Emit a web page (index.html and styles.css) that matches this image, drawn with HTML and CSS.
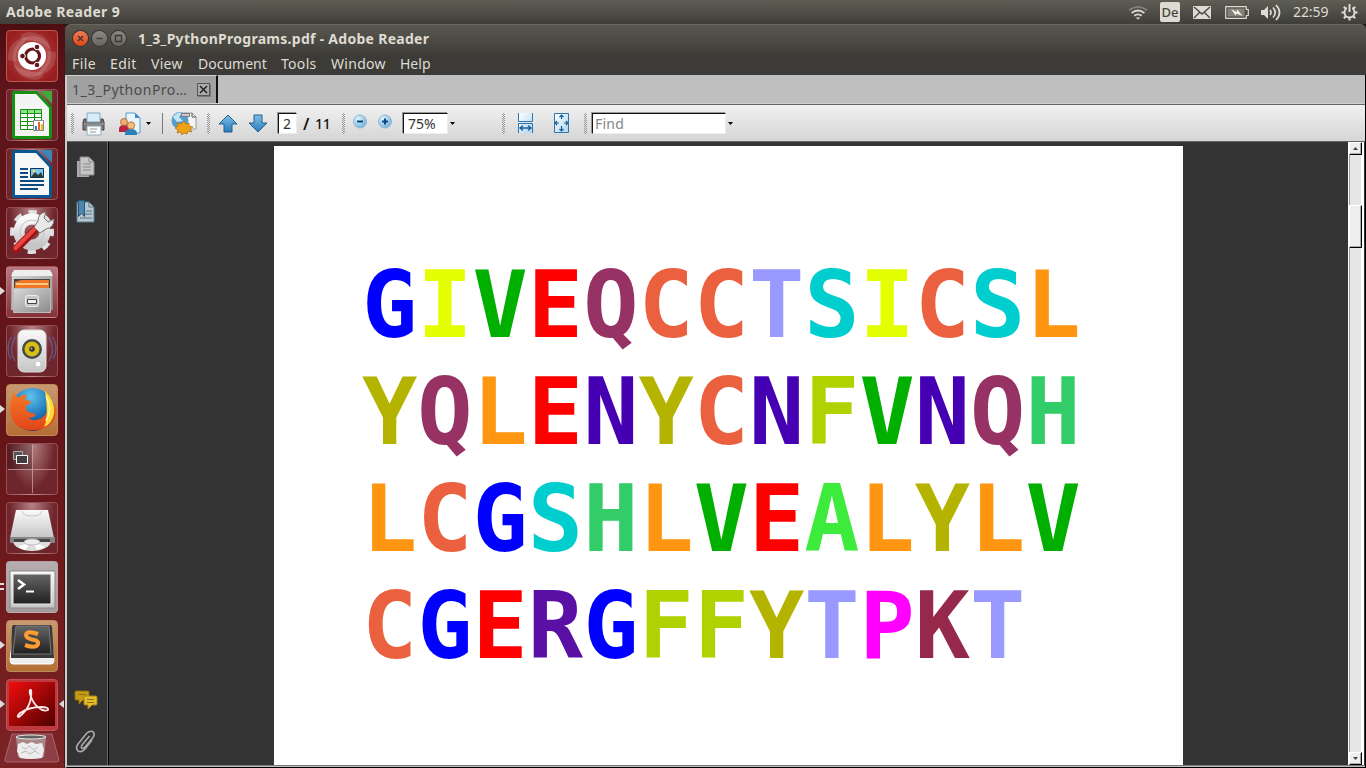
FILE: index.html
```
<!DOCTYPE html>
<html lang="en">
<head>
<meta charset="utf-8">
<title>1_3_PythonPrograms.pdf - Adobe Reader</title>
<link rel="stylesheet" href="styles.css">
</head>
<body>
<svg class="defs" width="0" height="0">
  <defs>
    <linearGradient id="silver" x2="0" y2="1"><stop stop-color="#fafafa"/><stop offset="1" stop-color="#c5c5c5"/></linearGradient>
    <linearGradient id="cabinet" x2="1" y2="1"><stop stop-color="#d8d8d8"/><stop offset="1" stop-color="#8b8b8b"/></linearGradient>
    <linearGradient id="blue" x2="0" y2="1"><stop stop-color="#7cc0ea"/><stop offset="1" stop-color="#2b7cba"/></linearGradient>
    <linearGradient id="paper" x2="1" y2="1"><stop stop-color="#fff"/><stop offset="1" stop-color="#aed3ee"/></linearGradient>
    <linearGradient id="dark" x2="0" y2="1"><stop stop-color="#666"/><stop offset="1" stop-color="#202020"/></linearGradient>
    <linearGradient id="adobe" x2="1" y2="1"><stop stop-color="#f20d0d"/><stop offset="1" stop-color="#4d0000"/></linearGradient>
    <linearGradient id="fox" x2="0" y2="1"><stop stop-color="#f37a24"/><stop offset="1" stop-color="#e2451b"/></linearGradient>
    <radialGradient id="globe" cx=".45" cy=".2" r=".8"><stop stop-color="#5fc3ee"/><stop offset=".6" stop-color="#1c73b6"/><stop offset="1" stop-color="#0b2f68"/></radialGradient>
    <radialGradient id="ball" cx=".35" cy=".3" r=".8"><stop stop-color="#e2f3fd"/><stop offset="1" stop-color="#68addb"/></radialGradient>
  </defs>
</svg>

<header class="panel">
  <span class="panel-title">Adobe Reader 9</span>
  <div class="tray">
    <svg class="wifi" width="20" height="16" viewBox="0 0 20 16" fill="none" stroke="#dfdbd2" stroke-width="1.8"><path d="M1 5.2Q10-1.6 19 5.2" stroke="#85827a"/><path d="M3.6 8Q10 3 16.4 8M6.3 10.8Q10 8 13.7 10.8"/><path d="M7.8 12.4h4.4L10 14.8z" fill="#dfdbd2" stroke="none"/></svg>
    <span class="lang">De</span>
    <svg class="mail" width="18" height="14" viewBox="0 0 18 14"><path fill="#dfdbd2" d="M0 0h18v13H0z"/><path d="M1 1l8 7 8-7M1 12l5.500-5.500M17 12l-5.500-5.500" fill="none" stroke="#4b4944" stroke-width="1.400"/></svg>
    <svg class="battery" width="24" height="14" viewBox="0 0 24 14"><path d="M.7.700h20.600v2.800h2v6h-2v2.800H.7z" fill="none" stroke="#dfdbd2" stroke-width="1.200"/><path d="M2.500 2.500h17v8h-17z" fill="#85827a"/><path d="M6 3l6 3V3l5.500 7-6.500-2.500V10z" fill="#f2f0e9"/></svg>
    <svg class="sound" width="20" height="17" viewBox="0 0 20 17"><path d="M0 6h3l4-4v13l-4-4H0z" fill="#dfdbd2"/><g fill="none" stroke="#dfdbd2" stroke-width="1.700"><path d="M9 6q2 2.500 0 5M12 3.500q4.500 5 0 10M15 1q7 7.500 0 15"/></g></svg>
    <span class="clock">22:59</span>
    <svg class="gear" width="17" height="17" viewBox="0 0 17 17" fill="none" stroke="#dfdbd2"><circle cx="8.500" cy="8.500" r="5" stroke-width="1.900"/><path d="M.5 8.500h3M13.500 8.500h3M2.800 2.800l2 2M12.200 12.200l2 2M14.200 2.800l-2 2M4.800 12.200l-2 2M8.500 13.500v3" stroke-width="2"/><path d="M8.500 1.500v6" stroke="#504e48" stroke-width="5"/><path d="M8.500 0v8" stroke-width="2"/></svg>
  </div>
</header>

<div class="desktop">
  <nav class="launcher">
    <div class="tile dash">
      <svg viewBox="0 0 52 52"><g fill="#fff" fill-opacity=".13"><path d="M2 30Q1 8 26 6q14 0 19 14Q34 8 22 11 8 16 10 32z"/><path d="M22 2q24 1 23 25-2 14-15 19 11-12 7-24Q32 8 16 10 12 4 22 2z"/><path d="M50 22q1 22-24 25-14 0-19-14 11 11 23 8 14-5 12-20z"/><path d="M30 50Q7 49 7 25 9 11 22 7 11 19 15 31q5 13 21 11 4 6-6 8z"/></g><circle cx="26" cy="26" r="14" fill="#fff"/><circle cx="26.500" cy="26" r="7" fill="none" stroke="#641417" stroke-width="3.200"/><g fill="#641417" stroke="#fff"><circle cx="16.500" cy="26" r="2.800"/><circle cx="31" cy="17" r="2.800"/><circle cx="31" cy="35" r="2.800"/></g></svg>
    </div>
    <div class="tile doc">
      <svg viewBox="0 0 52 52"><path d="M8 2h23l15 16v30q0 2-2 2H8q-2 0-2-2V4q0-2 2-2z" fill="#169213"/><path d="M9 5h21l13 14v28H9z" fill="#f4f4f4"/><path d="M34 2h12v13z" fill="#44a53d"/><path d="M14 20h22v21H14z" fill="#fff"/><path d="M14 20h22v4H14z" fill="#8ee184"/><path d="M14.500 20.500h21v20h-21zM14 24.500h22M14 28.500h22M14 32.500h22M14 36.500h22M21.500 20v21M28.500 20v21" fill="none" stroke="#169213"/><path d="M27.500 31.500h10v10h-10z" fill="#fff" stroke="#888"/><path fill="#1a8bd4" d="M29 37h2v4h-2z"/><path fill="#ec641f" d="M32 33h2v8h-2z"/><path fill="#f1b921" d="M35 35h2v6h-2z"/></svg>
    </div>
    <div class="tile doc">
      <svg viewBox="0 0 52 52"><path d="M8 2h23l15 16v30q0 2-2 2H8q-2 0-2-2V4q0-2 2-2z" fill="#0c568f"/><path d="M9 5h21l13 14v28H9z" fill="#f7f7f7"/><path d="M34 2h12v13z" fill="#3986b9"/><path d="M14 21h8M14 25h8M14 29h8M14 33h24M14 37h24M14 41h18" stroke="#0a4c82" stroke-width="2"/><path d="M24.500 20.500h13v9h-13z" fill="#7cc6ee" stroke="#0a3455"/><path d="M25 29l4-5 3 3 3-3 2 5z" fill="#2e3d32"/><circle cx="28" cy="23" r="1.200" fill="#ffd83a"/></svg>
    </div>
    <div class="tile">
      <svg viewBox="0 0 52 52"><circle cx="26" cy="25" r="19.500" fill="none" stroke="#e0e0e0" stroke-width="5" stroke-dasharray="8.200 7.115" stroke-dashoffset="4.100"/><circle cx="26" cy="25" r="13" fill="none" stroke="url(#silver)" stroke-width="11"/><circle cx="26" cy="25" r="12" fill="none" stroke="#c3c3c3"/><path d="M10 42L31 21" stroke="#a31414" stroke-width="8" stroke-linecap="round"/><path d="M9.500 41L30 20.500" stroke="#e54843" stroke-width="4" stroke-linecap="round"/><path d="M28 20l4-6q0-8 8-9l-2 6 4 4 6-3q0 9-8 10l-6 4z" fill="#e9e9e9" stroke="#777"/></svg>
    </div>
    <div class="tile glow-pink">
      <svg viewBox="0 0 52 52"><path d="M6 6h40l1 38H5z" fill="url(#cabinet)"/><path d="M8 4h36l3 6H5z" fill="#eee"/><path d="M8 13h36v10H8z" fill="#444"/><path d="M9 16l6-2h28v8H9z" fill="#ee7627"/><path d="M10 18h32" stroke="#ffe0a4" stroke-width="1.500"/><path d="M7.500 22.500h37v24h-37z" fill="url(#cabinet)" stroke="#bbb"/><rect x="19.500" y="29.500" width="13" height="11" rx="2" fill="#c8c8c8" stroke="#eee"/><path d="M21.500 33.500h9v4h-9z" fill="#eee" stroke="#444"/></svg>
    </div>
    <div class="tile">
      <svg viewBox="0 0 52 52"><path d="M9 12q-7 12 0 24M43 12q7 12 0 24M5 12q-6 12 0 22M47 12q6 12 0 22" fill="none" stroke="#686a98" stroke-opacity=".7" stroke-width="1.500"/><rect x="12" y="5" width="28" height="42" rx="6" fill="url(#silver)" stroke="#ddd"/><circle cx="26" cy="24" r="10" fill="#454b4a"/><circle cx="26" cy="24" r="7.500" fill="#d8bd15"/><circle cx="26" cy="24" r="2.800" fill="#303636"/><circle cx="25.500" cy="23.500" r="1" fill="#bbb"/><circle cx="32" cy="39" r="3" fill="#fff" stroke="#ccc"/><circle cx="18" cy="40" r="2" fill="none" stroke="#ccc"/></svg>
    </div>
    <div class="tile glow-orange">
      <svg viewBox="0 0 52 52"><circle cx="26.500" cy="25.500" r="21.500" fill="url(#globe)"/><path d="M8 8l4 6q4-4 9-3l-2 5 6 1-1 3q-5 1-4 4 0 4 6 5l4 1q-2 4-8 4 8 5 15-1 5-4 5-10 6 5 8-4 3 21-14 26Q16 50 7 37 1 23 8 8z" fill="url(#fox)"/><path d="M39 7q10 9 9 22-2 11-10 14 5-9 1-36z" fill="#ffdb35"/><path d="M40 12q7 13 0 25" fill="none" stroke="#fff5a4" stroke-width="1.500"/></svg>
    </div>
    <div class="tile">
      <svg viewBox="0 0 52 52"><path d="M1 1h25v25H1z" fill="#000" opacity=".2"/><path d="M26.500 2v48M2 26.500h48" stroke="#d1adad" stroke-opacity=".7"/><path d="M7.500 8.500h9v8h-9z" fill="#555" stroke="#aaa"/><path d="M10.500 12.500h11v8h-11z" fill="#443d3d" stroke="#fff"/></svg>
    </div>
    <div class="tile">
      <svg viewBox="0 0 52 52"><ellipse cx="26" cy="39" rx="19" ry="10" fill="#ddd"/><path d="M26 39l-14 6 7 3zM26 39l13 6-8 3z" fill="#fff"/><path d="M10 8h32l6 28H4z" fill="url(#silver)"/><path d="M4 35h45v6h-4l-2-3H9l-2 3H4z" fill="#858585"/><path d="M8 37h36v3H8z" fill="#444"/><ellipse cx="26" cy="40" rx="8" ry="3" fill="#eee" stroke="#bbb"/><path d="M16 9q1 5 10 5t10-5" fill="none" stroke="#c5c5c5"/></svg>
    </div>
    <div class="tile glow-grey">
      <svg viewBox="0 0 52 52"><path d="M4 10h45v37H4z" fill="url(#silver)" stroke="#888"/><path d="M7 13h38v30H7z" fill="url(#dark)" stroke="#eee"/><path d="M12 19l6 4.500-6 4.500" fill="none" stroke="#fff" stroke-width="2.500"/><path d="M20 30.500h8" stroke="#fff" stroke-width="2"/></svg>
    </div>
    <div class="tile glow-orange">
      <svg viewBox="0 0 52 52"><path d="M8 9h36l4 31q0 4-3 4H7q-3 0-3-4z" fill="#eee" stroke="#fff"/><path d="M7 5h37q2 0 2 2l2 31H5L6 7z" fill="#393939"/><path d="M10 6h33l2 28H7z" fill="url(#dark)" stroke="#777"/><path d="M32 14q-11-4-12 1 0 3 6 4.500 7 1 6 4.500-2 5-13 1" fill="none" stroke="#ff9d32" stroke-width="4"/></svg>
    </div>
    <div class="tile glow-red">
      <svg viewBox="0 0 52 52"><path d="M3 3h46v44H3z" fill="url(#adobe)"/><path d="M13 38q8-6 11-15 2-8 1-12-2-1-1 4 3 10 9 14 5 4 9 2 1-3-7-3-12 0-21 6-4 4-1 4z" fill="none" stroke="#fae9e8" stroke-width="1.800"/></svg>
    </div>
    <div class="trash">
      <svg viewBox="0 0 56 31"><path d="M8 1h40l7 26q0 2-3 2H4q-4 0-3-3z" fill="#8d3f45" stroke="#a9666b"/><path d="M12 4h30l-2 20q-13 3-26 0z" fill="#a98788"/><ellipse cx="27" cy="4" rx="15" ry="2" fill="#626262" stroke="#e8e8e8"/><path d="M14 11l5-2 4 2 5-2 4 2 6-1 2 7-2 8q-12 2-22 0l-3-7z" fill="#ececec"/><path d="M18 14l4 2 3-3 5 4 4-3M17 20l5-2 4 3 5-3 4 3" fill="none" stroke="#bbb"/></svg>
    </div>
    <i class="pip at-files"></i><i class="pip at-firefox"></i><i class="pip at-sublime"></i><i class="pip at-reader"></i><i class="pip at-active"></i><i class="pair"></i>
  </nav>

  <main class="window">
    <div class="titlebar">
      <i class="wbtn close"><svg viewBox="0 0 15 15"><path d="M5 5l5 5M10 5l-5 5"/></svg></i>
      <i class="wbtn"><svg viewBox="0 0 15 15"><path d="M4.500 7.500h6"/></svg></i>
      <i class="wbtn"><svg viewBox="0 0 15 15"><path d="M4.500 4.500h6v6h-6z"/></svg></i>
      <span class="title">1_3_PythonPrograms.pdf - Adobe Reader</span>
    </div>
    <div class="menubar"><span class="m1">File</span><span class="m2">Edit</span><span class="m3">View</span><span class="m4">Document</span><span class="m5">Tools</span><span class="m6">Window</span><span>Help</span></div>
    <div class="client">
      <div class="tabs">
        <div class="tab"><span class="tab-label">1_3_PythonPro…</span><i class="tab-close"><svg viewBox="0 0 11 11"><path d="M2 2l7 7M9 2L2 9" stroke="#222" stroke-width="1.500"/></svg></i></div>
      </div>
      <div class="toolbar">
        <i class="grip g1"></i>
        <svg class="print" width="24" height="24" viewBox="0 0 24 24"><path d="M5 1h13v9H5z" fill="#d7ecf7" stroke="#7caac4"/><path d="M2 7h2v4h15V7h2l1 3v8H1v-8z" fill="#777" stroke="#444"/><path d="M2 12h20" stroke="#aaa"/><path d="M5 14h14v9H5z" fill="#f7f9fa" stroke="#93aebf"/><path d="M8 17h7M8 20h6" stroke="#999"/></svg>
        <svg class="people" width="24" height="24" viewBox="0 0 24 24"><path d="M8 1h9l5 5v15H8z" fill="#e9f5fd" stroke="#5b9cc8"/><path d="M17 1v5h5" fill="#3e8fc8"/><path d="M1 17q0-4 5-4t5 4v3H1z" fill="#bb2447"/><circle cx="6" cy="10" r="3.500" fill="#eeb070" stroke="#9c5523" stroke-width=".7"/><path d="M7 22q0-5 6-5t6 5v1H7z" fill="#2782bb"/><circle cx="13" cy="13.500" r="3.700" fill="#f5bd7c" stroke="#9c5523" stroke-width=".7"/></svg>
        <i class="caret c1"></i><i class="rule"></i>
        <svg class="web" width="28" height="26" viewBox="0 0 28 26"><path d="M13 3h8l4 4v12H13z" fill="#f5f5f5" stroke="#999"/><path d="M21 3v4h4" fill="none" stroke="#555"/><circle cx="9" cy="10.500" r="8.500" fill="#559fd0"/><path d="M2 7q5-6 9-4l-3 4 4 4-6 1z" fill="#c4e3f3"/><path d="M10.500 3.500h8v3h-8z" fill="#ccc" stroke="#777"/><path d="M13 11l2 3 3-1v3l4 1-3 2 2 3-4-1-1 3-3-1-2 2-1-3-4 1 1-3-3-2 3-2-1-3 4 1z" fill="#eda315" stroke="#b8740f" stroke-width=".8"/></svg>
        <i class="grip g2"></i>
        <svg class="up" width="20" height="19" viewBox="0 0 20 19"><path d="M10 1l9 9h-5v8H6v-8H1z" fill="url(#blue)" stroke="#22608f"/></svg>
        <svg class="down" width="20" height="19" viewBox="0 0 20 19"><path d="M10 18l9-9h-5V1H6v8H1z" fill="url(#blue)" stroke="#22608f"/></svg>
        <span class="field page-no">2</span><span class="slash">/</span><span class="total">11</span>
        <i class="grip g3"></i>
        <svg class="minus" width="16" height="16" viewBox="0 0 16 16"><circle cx="8" cy="7.500" r="6.500" fill="url(#ball)" stroke="#8fb9d3"/><path d="M5 7.500h6" stroke="#0c487c" stroke-width="2"/></svg>
        <svg class="plus" width="16" height="16" viewBox="0 0 16 16"><circle cx="8" cy="7.500" r="6.500" fill="url(#ball)" stroke="#8fb9d3"/><path d="M5 7.500h6M8 4.500v6" stroke="#0c487c" stroke-width="2"/></svg>
        <span class="field zoom">75%</span><i class="caret c2"></i>
        <i class="grip g4"></i>
        <svg class="fitw" width="18" height="22" viewBox="0 0 18 22"><path d="M1.500 1v8.500h14V1M1.500 21v-9.500h14V21" fill="url(#paper)" stroke="#2e77ae"/><path d="M3 16h11M6 13.500L3 16l3 2.500M11 13.500l3 2.500-3 2.500" fill="none" stroke="#17619a" stroke-width="1.300"/></svg>
        <svg class="fitp" width="18" height="22" viewBox="0 0 18 22"><path d="M1.500 1.500h14v19h-14z" fill="url(#paper)" stroke="#2e77ae"/><path d="M8.500 3v4M8.500 14v5M2 11h4M11 11h4M6.500 5l2-2 2 2M6.500 17l2 2 2-2M4 9l-2 2 2 2M13 9l2 2-2 2" fill="none" stroke="#17619a" stroke-width="1.200"/></svg>
        <i class="grip g5"></i>
        <span class="field find">Find</span><i class="caret c3"></i>
      </div>
      <div class="content">
        <aside class="side">
          <svg width="20" height="24" viewBox="0 0 20 24"><path d="M1 5h12v16H1z" fill="#aaa"/><path d="M4 1h9l5 5v13H4z" fill="#c6c6c6" stroke="#888"/><path d="M13 1v5h5M7 8h8M7 11h8M7 14h8" fill="none" stroke="#888"/></svg>
          <svg width="20" height="24" viewBox="0 0 20 24"><path d="M1 2h12l5 5v15H1z" fill="#b9c6cf" stroke="#547b93"/><path d="M2.500.500h6v16l-3-3-3 3z" fill="#4b86ac" stroke="#245776"/><path d="M13 2v5h5M10 11h6M9 14h7M4 18h12" fill="none" stroke="#587385"/></svg>
          <svg class="notes" width="24" height="20" viewBox="0 0 24 20"><path d="M2 1h12q1 0 1 1v7q0 1-1 1H9l-4 4v-4H2q-1 0-1-1V2q0-1 1-1z" fill="#c59c16" stroke="#8d6d09"/><path d="M11 6h11q1 0 1 1v7q0 1-1 1h-4l-4 4v-4h-3q-1 0-1-1V7q0-1 1-1z" fill="#e4bd2a" stroke="#a58217"/><path d="M13 9.500h7M13 12.500h7M4 4.500h8" stroke="#8b711a"/></svg>
          <svg class="clip" width="22" height="24" viewBox="0 0 22 24" fill="none" stroke="#aaa" stroke-width="1.600"><path d="M14.500 6L7 15q-1.500 3 .5 3.500 1.500 0 3-2L18 7.500q2.500-4-.5-6-3-1-6 2L3 14q-3 4.500 0 7 3.500 2 7-2L17 10"/></svg>
        </aside>
        <section class="viewer">
          <article class="page">
            <div class="seq"><b class="G">G</b><b class="I">I</b><b class="V">V</b><b class="E">E</b><b class="Q">Q</b><b class="C">C</b><b class="C">C</b><b class="T">T</b><b class="S">S</b><b class="I">I</b><b class="C">C</b><b class="S">S</b><b class="L">L</b></div>
            <div class="seq"><b class="Y">Y</b><b class="Q">Q</b><b class="L">L</b><b class="E">E</b><b class="N">N</b><b class="Y">Y</b><b class="C">C</b><b class="N">N</b><b class="F">F</b><b class="V">V</b><b class="N">N</b><b class="Q">Q</b><b class="H">H</b></div>
            <div class="seq"><b class="L">L</b><b class="C">C</b><b class="G">G</b><b class="S">S</b><b class="H">H</b><b class="L">L</b><b class="V">V</b><b class="E">E</b><b class="A">A</b><b class="L">L</b><b class="Y">Y</b><b class="L">L</b><b class="V">V</b></div>
            <div class="seq"><b class="C">C</b><b class="G">G</b><b class="E">E</b><b class="R">R</b><b class="G">G</b><b class="F">F</b><b class="F">F</b><b class="Y">Y</b><b class="T">T</b><b class="P">P</b><b class="K">K</b><b class="T">T</b></div>
          </article>
        </section>
        <div class="scroll">
          <i class="sbtn"><svg viewBox="0 0 5 3"><path d="M0 3h5L2.500 0z"/></svg></i>
          <i class="thumb"></i>
          <i class="sbtn"><svg viewBox="0 0 5 3"><path d="M0 0h5L2.500 3z"/></svg></i>
        </div>
      </div>
    </div>
  </main>
</div>
</body>
</html>
```
FILE: styles.css
```
* { box-sizing: border-box; }
body { margin: 0; width: 1366px; height: 768px; overflow: hidden; background: #1c1a18; font: 14px/20px "Noto Sans", "Open Sans", sans-serif; }
svg { display: block; flex: none; }
i { font-style: normal; }
.defs { position: absolute; }

.panel { height: 24px; display: flex; justify-content: space-between; background: linear-gradient(#5f5e55, #3e3d39); color: #dfdbd2; }
.panel-title { padding: 2px 0 0 6px; font-size: 14px; font-weight: 700; letter-spacing: .35px; white-space: nowrap; }
.tray { display: flex; align-items: flex-start; width: 238px; }
.wifi { margin-top: 5px; }
.lang { width: 20px; height: 20px; margin: 2px 0 0 12px; border-radius: 2px; background: #dfdbd2; color: #47453f; text-align: center; font-size: 13px; font-weight: 500; line-height: 20px; }
.mail { margin: 6px 0 0 13px; }
.battery { margin: 6px 0 0 14px; }
.sound { margin: 4px 0 0 12px; }
.clock { width: 37px; margin: 2px 0 0 12px; font-size: 14px; letter-spacing: -.1px; }
.gear { margin: 4px 0 0 11px; }

.desktop { display: flex; height: 744px; }
.launcher { position: relative; width: 65px; padding: 6px 0 0 6px; background: linear-gradient(#4c0e11, #5e1419 8%, #651519 55%, #7b2225); display: flex; flex-direction: column; gap: 7px; border-right: 1px solid #4f1013; }
.tile { width: 52px; height: 52px; flex: none; border-radius: 4px; border: 1px solid rgba(225,165,165,.32); background: radial-gradient(ellipse at 50% 0, rgba(255,225,225,.5), transparent 65%), #6e252b; }
.tile svg { width: 52px; height: 52px; margin: -1px; }
.dash { background: radial-gradient(circle, #b94c4d, #981f20 80%); border-color: #bf5656; }
.glow-pink { background: linear-gradient(#b87982, #843138); }
.glow-orange { background: linear-gradient(#c89a72, #b46e34); border-color: #c18b59; }
.glow-grey { background: linear-gradient(#b5adb0, #a49b9e); }
.glow-red { background: #bd393d; border-color: #c85156; }
.trash { width: 56px; height: 31px; margin: -5px 0 0 -2px; flex: none; }
.pip { position: absolute; left: 0; width: 5px; height: 8px; background: #ddd; clip-path: polygon(0 0, 100% 50%, 0 100%); }
.at-files { top: 263px; }
.at-firefox { top: 381px; }
.at-sublime { top: 617px; }
.at-reader { top: 676px; }
.at-active { top: 676px; left: 59px; clip-path: polygon(100% 0, 0 50%, 100% 100%); }
.pair { position: absolute; left: 0; top: 559px; width: 4px; height: 7px; border: solid #ddd; border-width: 2px 0; }

.window { width: 1301px; display: flex; flex-direction: column; background: #3c3b37; border-radius: 6px 6px 0 0; }
.titlebar { height: 29px; display: flex; align-items: flex-start; padding: 6px 0 0 8px; border-top: 1px solid #6a685e; border-radius: 6px 6px 0 0; background: linear-gradient(#59574f, #403f3a); color: #dfdbd2; }
.wbtn { width: 15px; height: 15px; margin-right: 4px; border-radius: 50%; background: linear-gradient(#8b8980, #67655d); box-shadow: 0 0 0 1px #34332f; }
.wbtn svg { fill: none; stroke: #393833; stroke-width: 1.3; }
.close { background: linear-gradient(#f37b55, #dc4718); }
.title { margin: -2px 0 0 8px; font-weight: 700; font-size: 14px; letter-spacing: .28px; white-space: nowrap; }
.menubar { height: 22px; display: flex; padding: 1px 0 0 7px; color: #dfdbd2; line-height: 20px; white-space: nowrap; }
.m1 { width: 38px; letter-spacing: .4px; } .m2 { width: 41px; letter-spacing: .4px; } .m3 { width: 47px; letter-spacing: .3px; } .m4 { width: 83px; } .m5 { width: 50px; letter-spacing: .3px; } .m6 { width: 69px; letter-spacing: .3px; }

.client { height: 693px; border-left: 2px solid #cbcbcb; border-right: 1px solid #000; border-bottom: 1px solid #000; display: flex; flex-direction: column; background: #bfbfbf; }
.tabs { height: 29px; display: flex; border-bottom: 1px solid #cfcfcf; }
.tab { width: 151px; height: 28px; padding: 4px 0 0 5px; display: flex; background: #a1a1a1; border-top: 1px solid #d0d0d0; border-right: 2px solid #111; color: #4b4b4b; }
.tab-label { width: 125px; font-size: 14px; line-height: 19px; letter-spacing: .5px; }
.tab-close { width: 13px; height: 13px; margin-top: 3px; border: 1px solid #555; background: #aaa; box-shadow: 1px 1px #777; }
.toolbar { height: 38px; display: flex; align-items: flex-start; padding: 7px 0 0 4px; border-top: 1px solid #666; border-bottom: 1px solid #666; background: linear-gradient(#f1f1f1, #d5d5d5); color: #111; }
.grip { width: 3px; height: 21px; margin-top: 1px; flex: none; background: repeating-conic-gradient(#999 0 25%, transparent 0 50%) 0 0 / 2px 2px; }
.print { margin-left: 8px; }
.people { margin-left: 12px; }
.caret { width: 5px; height: 3px; margin-top: 10px; flex: none; background: #000; clip-path: polygon(0 0, 100% 0, 50% 100%); }
.c1 { margin-left: 4px; }
.rule { width: 1px; height: 21px; margin: 1px 0 0 11px; background: #777; }
.web { margin-left: 8px; margin-top: -2px; }
.g2 { margin-left: 8px; }
.up { margin: 2px 0 0 8px; }
.down { margin: 2px 0 0 10px; }
.field { height: 21px; border: 1px solid; border-color: #111 #eee #eee #111; box-shadow: -1px -1px #999; background: #fff; line-height: 20px; padding-left: 4px; color: #333; }
.page-no { width: 19px; margin: 1px 0 0 10px; }
.slash { width: 12px; margin: 2px 0 0 6px; font-size: 16px; font-weight: 600; }
.total { width: 17px; margin: 2px 0 0 0; font-weight: 500; letter-spacing: -.2px; }
.g3 { margin-left: 10px; }
.minus { margin: 2px 0 0 7px; }
.plus { margin: 2px 0 0 9px; }
.zoom { width: 45px; margin: 1px 0 0 10px; }
.c2 { margin-left: 2px; }
.g4 { margin-left: 47px; }
.fitw { margin: 0 0 0 12px; }
.fitp { margin: 0 0 0 18px; }
.g5 { margin-left: 13px; }
.find { width: 134px; margin: 1px 0 0 5px; padding-left: 2px; color: #858585; letter-spacing: .2px; }
.c3 { margin-left: 2px; }

.content { height: 624px; display: flex; background: #333; border-bottom: 1px solid #777; }
.side { width: 42px; display: flex; flex-direction: column; padding: 14px 0 11px 9px; gap: 20px; border-right: 1px solid #000; box-shadow: inset -1px 0 #666; }
.notes { margin: auto 0 0 -2px; }
.clip { margin-left: -1px; }
.viewer { width: 1239px; padding: 4px 0 0 165px; overflow: hidden; }
.page { width: 909px; height: 620px; padding: 106px 0 0 88px; background: #fff; font: 700 91.8px/107px "DejaVu Sans Mono", monospace; }
.seq { height: 107px; white-space: nowrap; }
.G { color: #00f; } .I { color: #e4ff00; } .V { color: #00af00; } .E { color: #f00; } .Q { color: #963264; }
.C { color: #eb613f; } .T { color: #9999ff; } .S { color: #00cdcd; } .L { color: #ff9611; } .Y { color: #b4b400; }
.N { color: #4600b4; } .F { color: #afd200; } .H { color: #32cd69; } .A { color: #3ceb3c; } .R { color: #5a0fa5; }
.P { color: #f0f; } .K { color: #96284b; }
.scroll { width: 16px; display: flex; flex-direction: column; background: linear-gradient(90deg, #fff 1px, #999 1px, #999 2px, #e7e6e4 2px, #e7e6e4 13px, #fff 13px); }
.sbtn, .thumb { width: 13px; margin-left: 1px; background: #efeeec; border: 1px solid; border-color: #fff #000 #000 #fff; box-shadow: inset -1px -1px #aaa; }
.sbtn { height: 13px; }
.sbtn svg { width: 5px; height: 3px; margin: 4px 3px; fill: #444; }
.thumb { height: 44px; margin-top: 50px; margin-bottom: 504px; }
```
